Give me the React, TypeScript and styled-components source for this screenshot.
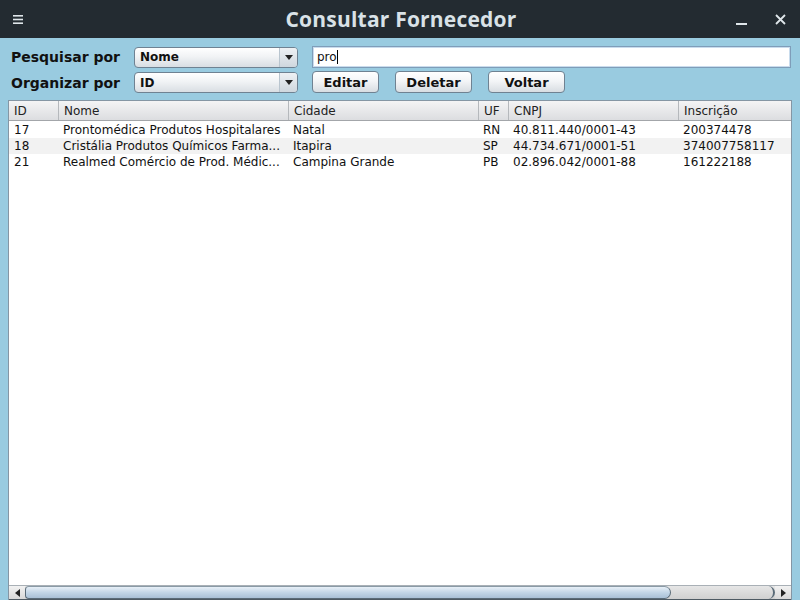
import React from 'react';
import styled, { createGlobalStyle } from 'styled-components';

const GlobalStyle = createGlobalStyle`
  html, body {
    margin: 0;
    padding: 0;
    width: 800px;
    height: 600px;
    overflow: hidden;
    background: #99cbe0;
  }
  * {
    box-sizing: border-box;
  }
`;

const Window = styled.div`
  width: 800px;
  height: 600px;
  display: flex;
  flex-direction: column;
  background: #99cbe0;
  font-family: "DejaVu Sans", sans-serif;
`;

const TitleBar = styled.div`
  height: 38px;
  flex: none;
  background: #232b31;
  display: grid;
  grid-template-columns: 1fr auto 1fr;
  align-items: center;
  padding: 0 13px;
  color: #dfe6ea;
`;

const TitleText = styled.div`
  text-align: center;
  font-family: "Open Sans", sans-serif;
  font-weight: 700;
  font-size: 21px;
  letter-spacing: 0.2px;
  color: #d9e2e7;
  padding-left: 2px;
`;

const TitleIcon = styled.div`
  display: flex;
  align-items: center;
`;

const WindowControls = styled.div`
  display: flex;
  justify-content: flex-end;
  gap: 28px;
  align-items: center;
  padding-right: 1px;
`;

const Content = styled.div`
  flex: 1;
  display: flex;
  flex-direction: column;
  padding: 8px 8px 0 8px;
  min-height: 0;
`;

const FormGrid = styled.div`
  display: grid;
  grid-template-columns: 112px 164px 1fr;
  column-gap: 14px;
  row-gap: 4px;
  align-items: center;
  padding-right: 1px;
`;

const Label = styled.div`
  font-weight: 700;
  font-size: 14px;
  color: #111;
  padding-left: 3px;
  white-space: nowrap;
`;

const Combo = styled.div`
  height: 21px;
  border: 1px solid #6f8292;
  border-radius: 4px;
  background: linear-gradient(#ffffff 0%, #f1f3f5 45%, #d9dee3 100%);
  display: flex;
  align-items: center;
  font-weight: 700;
  font-size: 12px;
  color: #111;
  overflow: hidden;
`;

const ComboText = styled.div`
  flex: 1;
  padding-left: 5px;
`;

const ComboArrow = styled.div`
  width: 18px;
  height: 100%;
  border-left: 1px solid #b9c5cf;
  display: flex;
  align-items: center;
  justify-content: center;
  background: linear-gradient(#eef1f4, #cfd7de);
`;

const TextField = styled.div`
  height: 22px;
  border: 1px solid #7f9db9;
  box-shadow: inset 0 0 0 1px #c9dced;
  background: #fff;
  display: flex;
  align-items: center;
  padding-left: 4px;
  font-size: 12px;
  color: #111;
`;

const Caret = styled.span`
  display: inline-block;
  width: 1px;
  height: 14px;
  background: #000;
`;

const ButtonRow = styled.div`
  display: flex;
  gap: 16px;
  margin-top: -1px;
`;

const Button = styled.div<{ $w: number }>`
  width: ${p => p.$w}px;
  height: 22px;
  border: 1px solid #6f8292;
  border-radius: 4px;
  background: linear-gradient(#ffffff 0%, #f3f5f7 45%, #d8dde2 100%);
  display: flex;
  align-items: center;
  justify-content: center;
  font-weight: 700;
  font-size: 13px;
  color: #111;
`;

const TableFrame = styled.div`
  margin-top: 7px;
  flex: 1;
  border: 1px solid #8596a4;
  border-bottom: none;
  background: #fff;
  display: flex;
  flex-direction: column;
  min-height: 0;
`;

const Columns = styled.div`
  display: grid;
  grid-template-columns: 49px 230px 190px 30px 170px 1fr;
`;

const HeaderRow = styled(Columns)`
  height: 20px;
  background: linear-gradient(#f4f4f5, #dcdde0);
  border-bottom: 1px solid #a3a6aa;
`;

const HeaderCell = styled.div`
  font-size: 12px;
  color: #222;
  padding-left: 5px;
  display: flex;
  align-items: center;
  border-left: 1px solid #b5b8bc;
  &:first-child {
    border-left: none;
  }
`;

const Body = styled.div`
  flex: 1;
  padding-top: 1px;
`;

const BodyRow = styled(Columns)<{ $alt: boolean }>`
  height: 16px;
  background: ${p => (p.$alt ? '#f2f2f2' : '#ffffff')};
`;

const Cell = styled.div`
  font-size: 12px;
  color: #111;
  padding-left: 5px;
  white-space: nowrap;
  overflow: hidden;
  line-height: 17px;
`;

const ScrollBar = styled.div`
  height: 15px;
  flex: none;
  display: flex;
  align-items: stretch;
  background: #dcdcdc;
  border-top: 1px solid #a9b0b6;
  border-bottom: 1px solid #4e5a63;
`;

const ScrollArrow = styled.div`
  width: 16px;
  display: flex;
  align-items: center;
  justify-content: center;
  background: linear-gradient(#f2f2f2, #d8d8d8);
`;

const ScrollTrack = styled.div`
  flex: 1;
  display: flex;
  background: linear-gradient(#e6e6e6, #d0d0d0);
`;

const ScrollThumb = styled.div<{ $w: number }>`
  width: ${p => p.$w}px;
  border: 1px solid #5a6b78;
  border-top-color: #8a9aa6;
  border-radius: 7px 12px 12px 7px / 7px 12px 12px 7px;
  background: linear-gradient(#e7eff7 0%, #c3d6e7 50%, #a9c0d6 100%);
`;

const ScrollRest = styled.div`
  flex: 1;
  position: relative;
`;

const ScrollCap = styled.div`
  position: absolute;
  right: 0;
  top: 0;
  bottom: 0;
  width: 8px;
  border-right: 2px solid #5a6b78;
  border-radius: 0 7px 7px 0;
`;

const rows = [
  ['17', 'Prontomédica Produtos Hospitalares', 'Natal', 'RN', '40.811.440/0001-43', '200374478'],
  ['18', 'Cristália Produtos Químicos Farma...', 'Itapira', 'SP', '44.734.671/0001-51', '374007758117'],
  ['21', 'Realmed Comércio de Prod. Médic...', 'Campina Grande', 'PB', '02.896.042/0001-88', '161222188'],
];

const headers = ['ID', 'Nome', 'Cidade', 'UF', 'CNPJ', 'Inscrição'];

const DownArrow = () => (
  <svg width="8" height="5" viewBox="0 0 8 5">
    <path d="M0 0 L8 0 L4 5 Z" fill="#222" />
  </svg>
);

export default function App() {
  return (
    <Window>
      <GlobalStyle />
      <TitleBar>
        <TitleIcon>
          <svg width="10" height="9" viewBox="0 0 10 9">
            <rect x="0" y="0" width="10" height="1.6" fill="#dfe6ea" />
            <rect x="0" y="3.7" width="10" height="1.6" fill="#dfe6ea" />
            <rect x="0" y="7.4" width="10" height="1.6" fill="#dfe6ea" />
          </svg>
        </TitleIcon>
        <TitleText>Consultar Fornecedor</TitleText>
        <WindowControls>
          <svg width="11" height="12" viewBox="0 0 11 12">
            <rect x="0" y="10" width="11" height="2" fill="#dfe6ea" />
          </svg>
          <svg width="11" height="11" viewBox="0 0 11 11">
            <path d="M1 1 L10 10 M10 1 L1 10" stroke="#dfe6ea" strokeWidth="1.8" />
          </svg>
        </WindowControls>
      </TitleBar>
      <Content>
        <FormGrid>
          <Label>Pesquisar por</Label>
          <Combo>
            <ComboText>Nome</ComboText>
            <ComboArrow><DownArrow /></ComboArrow>
          </Combo>
          <TextField>
            pro<Caret />
          </TextField>
          <Label>Organizar por</Label>
          <Combo>
            <ComboText>ID</ComboText>
            <ComboArrow><DownArrow /></ComboArrow>
          </Combo>
          <ButtonRow>
            <Button $w={67}>Editar</Button>
            <Button $w={77}>Deletar</Button>
            <Button $w={77}>Voltar</Button>
          </ButtonRow>
        </FormGrid>
        <TableFrame>
          <HeaderRow>
            {headers.map(h => (
              <HeaderCell key={h}>{h}</HeaderCell>
            ))}
          </HeaderRow>
          <Body>
            {rows.map((r, i) => (
              <BodyRow key={r[0]} $alt={i % 2 === 1}>
                {r.map((c, j) => (
                  <Cell key={j}>{c}</Cell>
                ))}
              </BodyRow>
            ))}
          </Body>
          <ScrollBar>
            <ScrollArrow>
              <svg width="5" height="8" viewBox="0 0 5 8">
                <path d="M5 0 L5 8 L0 4 Z" fill="#222" />
              </svg>
            </ScrollArrow>
            <ScrollTrack>
              <ScrollThumb $w={646} />
              <ScrollRest>
                <ScrollCap />
              </ScrollRest>
            </ScrollTrack>
            <ScrollArrow>
              <svg width="5" height="8" viewBox="0 0 5 8">
                <path d="M0 0 L0 8 L5 4 Z" fill="#222" />
              </svg>
            </ScrollArrow>
          </ScrollBar>
        </TableFrame>
      </Content>
    </Window>
  );
}
